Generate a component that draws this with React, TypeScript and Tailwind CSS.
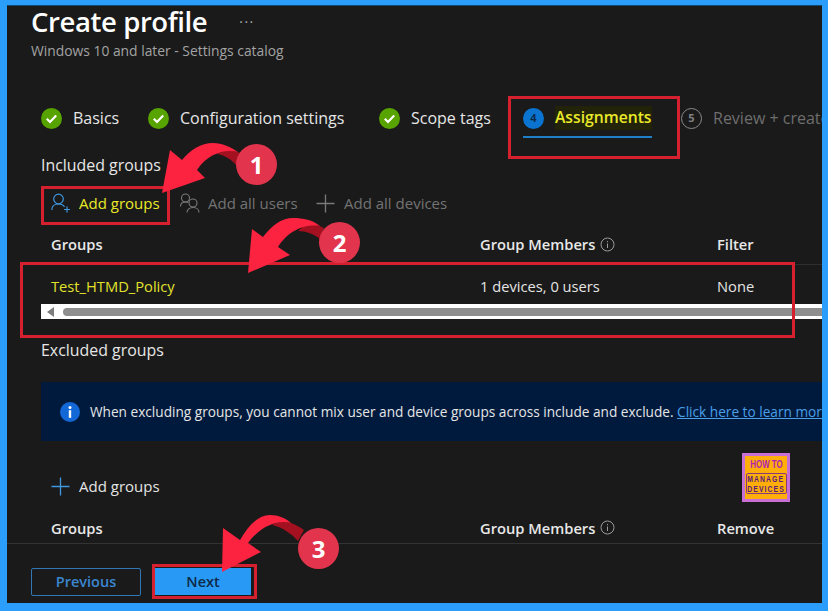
function Check() {
  return (
    <svg width="21" height="21" viewBox="0 0 21 21" className="shrink-0">
      <circle cx="10.5" cy="10.5" r="10.5" fill="#57a300" />
      <path d="M5.8 10.8l3.2 3.2 6.2-6.6" fill="none" stroke="#fff" strokeWidth="2.2" />
    </svg>
  );
}
function Step({ w, text }: { w: string; text: string }) {
  return (
    <div className={`flex items-center gap-[11px] shrink-0 ${w}`}>
      <Check />
      <span className="text-[16px] text-[#e6e6e6] whitespace-nowrap">{text}</span>
    </div>
  );
}
function InfoMini() {
  return (
    <svg width="15" height="15" viewBox="0 0 15 15" className="ml-[5px]">
      <circle cx="7.5" cy="7.5" r="6.5" fill="none" stroke="#9a9a9a" />
      <path d="M7.5 6.5v4.5M7.5 4v1.2" stroke="#9a9a9a" />
    </svg>
  );
}
function Plus({ color }: { color: string }) {
  return (
    <svg width="19" height="19" viewBox="0 0 19 19" className="shrink-0">
      <path d="M9.5 0.5v18M0.5 9.5h18" stroke={color} strokeWidth="1.3" />
    </svg>
  );
}
function HeaderRow({ h, last, cls }: { h: string; last: string; cls: string }) {
  return (
    <div className={`grid grid-cols-[429px_237px_1fr] pl-[10px] items-center text-[14.7px] font-semibold text-[#e8e8e8] ${h} ${cls}`}>
      <span>Groups</span>
      <span className="flex items-center">Group Members<InfoMini /></span>
      <span>{last}</span>
    </div>
  );
}
function Arrows() {
  return (
    <svg width="828" height="611" viewBox="0 0 828 611" className="absolute left-0 top-0 pointer-events-none">
      <path d="M217 154 C225 155 232 160 238 167 L243 155 L238 152 C231 150 224 150 217 154 Z" fill="#a3101f" />
      <path d="M162 193 L170 150 L182 160 C190 150 201 143 213 143 C222 143 231 147 238 152 C226 149 208 153 197 170 L205 178 Z" fill="#fb2340" />
      <path d="M298 231 C306 231 314 234 320 239 L324 228 C320 226 312 222 305 225 Z" fill="#a3101f" />
      <path d="M248 273 L252 229 L263 237 C272 225 282 218 293 218 C303 218 313 220 320 226 C308 224 290 228 278 247 L290 255 Z" fill="#fb2340" />
      <path d="M272 525 C282 527 292 534 298 541 L304 530 C298 526 294 524 291 523 C285 521 278 521 272 525 Z" fill="#a3101f" />
      <path d="M222 572 L223 528 L240 540 C248 526 258 515 270 515 C278 515 286 518 291 523 C280 520 262 524 248 543 L261 552 Z" fill="#fb2340" />
    </svg>
  );
}
function Badge({ x, y, n }: { x: string; y: string; n: string }) {
  return (
    <div className={`absolute ${x} ${y} w-[41px] h-[41px] rounded-full bg-[#e2344c] flex items-center justify-center text-white text-[24px] font-bold`}>
      {n}
    </div>
  );
}
export default function App() {
  return (
    <div className="relative w-[828px] h-[611px] overflow-hidden bg-[#2b9dfb] pt-[5px] pl-[7px] pr-[6px] pb-[8px] font-['Open_Sans',sans-serif]">
      <div className="h-full bg-[#1a1a1a] flex flex-col overflow-hidden border-t border-[#12476f]">
        <div className="pl-[24px]">
          <div className="h-[33px] pb-[2px] flex items-center">
            <h1 className="text-[27.5px] font-semibold text-white leading-none tracking-[-0.4px]">Create profile</h1>
            <span className="ml-[32px] text-[14px] leading-none text-[#a8a8a8] tracking-[1.5px]">···</span>
          </div>
          <div className="h-[24px] flex items-center text-[13.85px] text-[#a3a3a3] whitespace-nowrap">Windows 10 and later - Settings catalog</div>
        </div>

        <div className="pl-[34px] flex-1 min-h-0 overflow-hidden">
          <div className="mt-[35px] h-[40px] flex items-center whitespace-nowrap">
            <Step w="w-[107px]" text="Basics" />
            <Step w="w-[231px]" text="Configuration settings" />
            <Step w="w-[144px]" text="Scope tags" />
            <div className="relative w-[158px] shrink-0 flex items-center gap-[11px] h-full">
              <span className="w-[21px] h-[21px] rounded-full bg-[#0a74d0] text-[#0b2a4d] text-[11px] font-bold flex items-center justify-center">4</span>
              <span className="text-[15.7px] font-semibold text-[#e9e928] bg-[#23230a]">Assignments</span>
              <span className="absolute left-0 top-[38px] w-[129px] h-[2px] bg-[#1f7fc9]" />
            </div>
            <div className="flex items-center gap-[11px] shrink-0">
              <span className="w-[21px] h-[21px] rounded-full border border-[#8a8a8a] text-[#808080] text-[11px] font-bold flex items-center justify-center">5</span>
              <span className="text-[16px] text-[#6e6e6e]">Review + create</span>
            </div>
          </div>

          <div className="mt-[16px] h-[24px] flex items-center text-[15.9px] text-[#e6e6e6]">Included groups</div>

          <div className="mt-[7px] h-[36px] flex items-center pl-[10px] text-[15px] whitespace-nowrap">
            <svg width="20" height="20" viewBox="0 0 20 20" className="shrink-0">
              <circle cx="7.5" cy="6" r="4.8" fill="none" stroke="#3f97e0" strokeWidth="1.2" />
              <path d="M0.8 17c0-4 3-6 6.7-6s5 1.2 6 3" fill="none" stroke="#3f97e0" strokeWidth="1.2" />
              <path d="M16 13.5v6M13 16.5h6" stroke="#3f97e0" strokeWidth="1.2" />
            </svg>
            <span className="ml-[8px] w-[101px] text-[#e9e928]">Add groups</span>
            <svg width="20" height="20" viewBox="0 0 20 20" className="shrink-0">
              <circle cx="5.5" cy="5" r="4" fill="none" stroke="#7a7a7a" strokeWidth="1.1" />
              <path d="M0.5 13.5c0-3 2-4.5 5-4.5 1 0 2 .2 2.6.6" fill="none" stroke="#7a7a7a" strokeWidth="1.1" />
              <circle cx="13" cy="10" r="4" fill="none" stroke="#7a7a7a" strokeWidth="1.1" />
              <path d="M7 19.5c0-3 2.5-5 6-5s6 2 6 5" fill="none" stroke="#7a7a7a" strokeWidth="1.1" />
            </svg>
            <span className="ml-[8px] w-[108px] text-[#737373]">Add all users</span>
            <Plus color="#7a7a7a" />
            <span className="ml-[9px] text-[#737373]">Add all devices</span>
          </div>

          <HeaderRow h="h-[40px]" last="Filter" cls="mt-[4px] border-b border-[#2e2e2e]" />

          <div className="h-[39px] pt-[4px] grid grid-cols-[429px_237px_1fr] pl-[10px] items-center text-[14.7px] text-[#e4e4e4]">
            <span className="text-[#e2e22c]">Test_HTMD_Policy</span>
            <span>1 devices, 0 users</span>
            <span>None</span>
          </div>

          <div className="h-[15px] bg-white flex items-center">
            <span className="ml-[6px] w-0 h-0 border-y-[5px] border-y-transparent border-r-[7px] border-r-[#7d7d7d]" />
            <span className="ml-[9px] flex-1 h-[8px] rounded-l-full bg-[#8e8e8e]" />
          </div>

          <div className="mt-[20px] h-[24px] flex items-center text-[15.9px] text-[#e6e6e6]">Excluded groups</div>

          <div className="mt-[19px] h-[59px] pt-[1px] bg-[#001a3d] flex items-center pl-[19px] whitespace-nowrap text-[13.65px] text-[#e6e6e6]">
            <svg width="20" height="20" viewBox="0 0 20 20" className="shrink-0">
              <circle cx="10" cy="10" r="10" fill="#1268d6" />
              <rect x="8.8" y="8.2" width="2.4" height="7.6" fill="#fff" />
              <circle cx="10" cy="5.6" r="1.5" fill="#fff" />
            </svg>
            <span className="ml-[10px]">When excluding groups, you cannot mix user and device groups across include and exclude. <span className="text-[#4a9fe8] underline">Click here to learn more.</span></span>
          </div>

          <div className="mt-[27px] h-[36px] flex items-center pl-[10px] text-[15px] text-[#e4e4e4]">
            <Plus color="#3f97e0" />
            <span className="ml-[9px]">Add groups</span>
          </div>

          <HeaderRow h="h-[28px]" last="Remove" cls="mt-[10px]" />
        </div>

        <div className="h-[60px] shrink-0 border-t border-[#333333] pl-[24px] pt-[24px] flex items-start text-[14.5px] font-semibold">
          <button className="w-[110px] h-[28px] rounded-[2px] border border-[#2f78b5] text-[#3a86cf] flex items-center justify-center">Previous</button>
          <button className="ml-[14px] w-[96px] h-[27px] bg-[#2899f5] text-[#0e2a47] flex items-center justify-center">Next</button>
        </div>
      </div>

      <div className="absolute left-[41px] top-[186px] w-[129px] h-[39px] border-[3px] border-[#d4202f]" />
      <div className="absolute left-[508px] top-[96px] w-[172px] h-[63px] border-[3px] border-[#d4202f]" />
      <div className="absolute left-[20px] top-[262px] w-[775px] h-[76px] border-[3px] border-[#d4202f]" />
      <div className="absolute left-[152px] top-[564px] w-[105px] h-[35px] border-[3px] border-[#d4202f]" />

      <div className="absolute left-[742px] top-[453px] w-[48px] h-[49px] bg-[#ffae0a] border-[3px] border-[#c86fd6] flex flex-col items-center font-['Liberation_Sans',sans-serif] overflow-hidden">
        <span className="mt-[3px] text-[11px] font-bold leading-[11px] text-[#b01fb0] whitespace-nowrap scale-x-[0.72]">HOW TO</span>
        <div className="mt-[3px] w-[41px] h-[21px] border border-[#8a3a7a] rounded-[2px] flex flex-col items-center justify-center text-[9.5px] font-bold leading-[9.5px] text-[#5a1a7a] whitespace-nowrap">
          <span className="scale-x-[0.72] tracking-[1.5px]">MANAGE</span>
          <span className="scale-x-[0.72] tracking-[1.5px]">DEVICES</span>
        </div>
      </div>

      <Arrows />
      <Badge x="left-[236px]" y="top-[144px]" n="1" />
      <Badge x="left-[319px]" y="top-[222px]" n="2" />
      <Badge x="left-[298px]" y="top-[528px]" n="3" />
    </div>
  );
}
